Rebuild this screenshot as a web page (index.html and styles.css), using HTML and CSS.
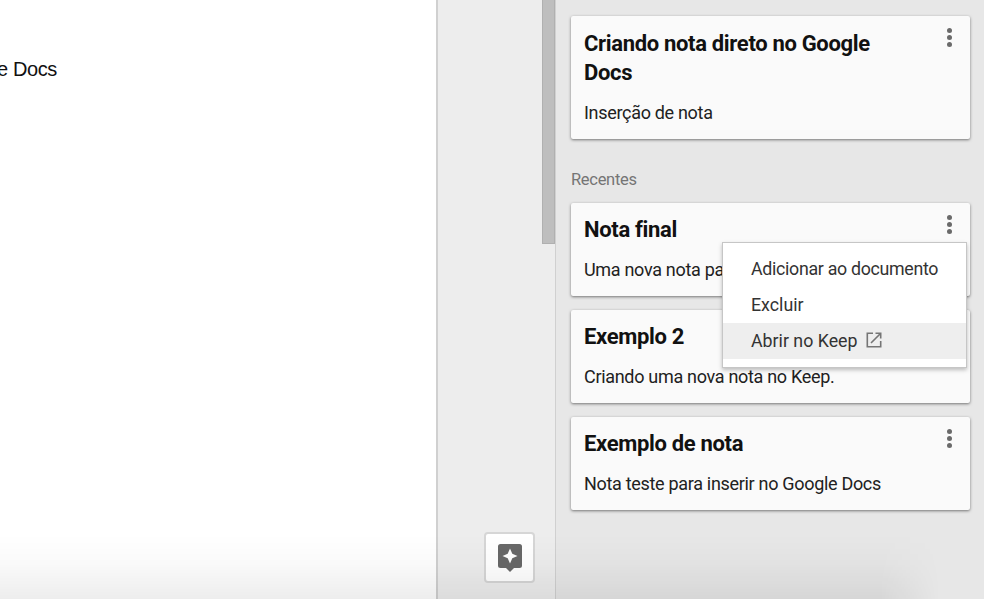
FILE: index.html
```html
<!DOCTYPE html>
<html lang="pt-BR">
<head>
    <meta charset="UTF-8">
    <meta name="viewport" content="width=device-width, initial-scale=1.0">
    <title>Google Docs - Keep</title>
    <link rel="stylesheet" href="styles.css">
</head>
<body>
    <div class="app">
        <!-- Document -->
        <main class="page">
            <p class="page-text">e Docs</p>
        </main>

        <div class="gutter">
            <button class="explore-btn" aria-label="Explorar">
                <svg width="24" height="28" viewBox="0 0 24 28">
                    <path fill="#686868" d="M2.500 0h19a2.500 2.500 0 0 1 2.500 2.500v19a2.500 2.500 0 0 1-2.500 2.500H16l-4 4-4-4H2.500a2.500 2.500 0 0 1-2.500-2.500v-19A2.500 2.500 0 0 1 2.500 0z"/>
                    <path fill="#fff" d="M12 4.500l2.300 5.200 5.200 2.300-5.200 2.300-2.300 5.200-2.300-5.200-5.200-2.300 5.200-2.300z"/>
                </svg>
            </button>
        </div>

        <div class="scrollbar"><div class="scrollbar-thumb"></div></div>

        <!-- Keep sidebar -->
        <aside class="sidebar">
            <div class="note related">
                <div class="note-content">
                    <h2>Criando nota direto no Google Docs</h2>
                    <p>Inserção de nota</p>
                </div>
                <button class="more" aria-label="Mais"><i></i><i></i><i></i></button>
            </div>

            <div class="label">Recentes</div>

            <div class="note">
                <div class="note-content">
                    <h2>Nota final</h2>
                    <p>Uma nova nota pa</p>
                </div>
                <button class="more" aria-label="Mais"><i></i><i></i><i></i></button>
                <ul class="menu">
                    <li>Adicionar ao documento</li>
                    <li>Excluir</li>
                    <li class="active">Abrir no Keep
                        <svg width="16" height="16" viewBox="0 0 16 16" fill="none" stroke="#757575" stroke-width="1.600">
                            <path d="M7 1.300H1.300v13.400h13.400V9M9.500 1.300h5.200v5.200M14.500 1.500L5 11"/>
                        </svg>
                    </li>
                </ul>
            </div>
            <div class="note">
                <div class="note-content">
                    <h2>Exemplo 2</h2>
                    <p>Criando uma nova nota no Keep.</p>
                </div>
            </div>
            <div class="note">
                <div class="note-content">
                    <h2>Exemplo de nota</h2>
                    <p>Nota teste para inserir no Google Docs</p>
                </div>
                <button class="more" aria-label="Mais"><i></i><i></i><i></i></button>
            </div>
        </aside>
    </div>
    <div class="bottom-shade"></div>
</body>
</html>
```

FILE: styles.css
```css
* {
    box-sizing: border-box;
}

body {
    margin: 0;
    font-family: Roboto, Arial, sans-serif;
    color: #212121;
    overflow: hidden;
}

button {
    padding: 0;
    border: 0;
    background: none;
}

.app {
    display: flex;
    height: 599px;
}

/* Document */
.page {
    width: 436px;
    background: #fff;
}

.page-text {
    margin: 57px 0 0 -3px;
    font: 20px/24px "Liberation Sans", Arial, sans-serif;
    letter-spacing: -0.4px;
    color: #111;
}

.gutter {
    width: 106px;
    display: flex;
    justify-content: flex-end;
    align-items: flex-end;
    padding: 0 7px 16px 0;
    background: #ededed;
    border-left: 2px solid #d0d0d0;
}

.explore-btn {
    width: 51px;
    height: 51px;
    display: flex;
    justify-content: center;
    align-items: center;
    background: #fff;
    border: 2px solid #d6d6d6;
    border-radius: 4px;
}

.scrollbar {
    width: 13px;
    background: #ededed;
}

.scrollbar-thumb {
    height: 244px;
    background: #bebebe;
    border: 1px solid #b0b0b0;
    border-top: 0;
}

/* Keep sidebar */
.sidebar {
    width: 429px;
    padding: 16px 14px 0 15px;
    background: #e7e7e7;
    border-left: 1px solid #d0d0d0;
}

.note {
    position: relative;
    display: flex;
    justify-content: space-between;
    margin-bottom: 14px;
    padding: 12px 18px 13px 13px;
    background: #fafafa;
    border-radius: 2px;
    box-shadow: 0 1px 3px rgba(0,0,0,0.5);
}

.note-content {
    width: 310px;
}

.note h2 {
    margin: 0 0 13px;
    font-size: 22px;
    line-height: 29px;
    font-weight: 700;
    letter-spacing: -0.33px;
    color: #111;
}

.related h2 {
    margin-top: 1px;
}

.note p {
    margin: 0;
    font-size: 18px;
    line-height: 26px;
    letter-spacing: -0.31px;
    white-space: nowrap;
}

.more {
    display: flex;
    flex-direction: column;
    gap: 2px;
    height: 20px;
}

.more i {
    width: 5px;
    height: 5px;
    border-radius: 50%;
    background: #6a6a6a;
}

.label {
    margin: 30px 0 12px;
    font-size: 16.500px;
    line-height: 22px;
    letter-spacing: -0.3px;
    color: #757575;
}

.menu {
    position: absolute;
    top: 39px;
    right: 3px;
    z-index: 2;
    width: 245px;
    margin: 0;
    padding: 8px 0 8px;
    list-style: none;
    background: #fff;
    border: 1px solid #c6c6c6;
    box-shadow: 0 2px 4px rgba(0,0,0,0.25);
}

.menu li {
    display: flex;
    align-items: center;
    gap: 8px;
    height: 36px;
    padding: 0 0 2px 28px;
    font-size: 17.800px;
    color: #333;
    white-space: nowrap;
}

.menu li:first-child {
    letter-spacing: -0.3px;
}

.menu .active {
    background: #eee;
}

.bottom-shade {
    position: fixed;
    left: 0;
    right: 0;
    bottom: 0;
    height: 65px;
    background: linear-gradient(to bottom, rgba(0,0,0,0), rgba(0,0,0,0.02) 45%, rgba(0,0,0,0.07));
    -webkit-mask-image: linear-gradient(to right, #000 880px, transparent 940px);
    mask-image: linear-gradient(to right, #000 880px, transparent 940px);
    pointer-events: none;
}
```
